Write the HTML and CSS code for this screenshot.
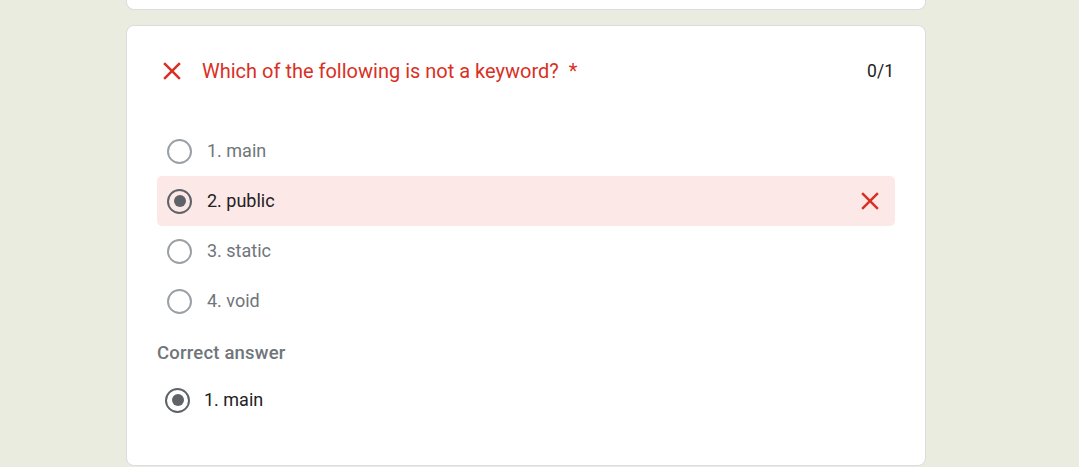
FILE: index.html
```html
<!DOCTYPE html>
<html>
<head>
<meta charset="utf-8">
<link rel="stylesheet" href="styles.css">
</head>
<body>
<div class="page">
  <div class="card card-prev"></div>
  <div class="card card-q">
    <div class="q-header">
      <div class="q-title">
        <svg class="x-icon" viewBox="0 0 24 24" width="30" height="30"><path fill="#d93025" d="M19 6.41L17.59 5 12 10.59 6.41 5 5 6.41 10.59 12 5 17.59 6.41 19 12 13.41 17.59 19 19 17.59 13.41 12z"/></svg>
        <span class="q-text">Which of the following is not a keyword?&nbsp; *</span>
      </div>
      <div class="q-score">0/1</div>
    </div>
    <div class="options">
      <div class="opt"><span class="radio"></span><span class="opt-label">1. main</span></div>
      <div class="opt opt-wrong"><span class="radio radio-on"></span><span class="opt-label">2. public</span>
        <svg class="x-icon x-row" viewBox="0 0 24 24" width="30" height="30"><path fill="#d93025" d="M19 6.41L17.59 5 12 10.59 6.41 5 5 6.41 10.59 12 5 17.59 6.41 19 12 13.41 17.59 19 19 17.59 13.41 12z"/></svg>
      </div>
      <div class="opt"><span class="radio"></span><span class="opt-label">3. static</span></div>
      <div class="opt"><span class="radio"></span><span class="opt-label">4. void</span></div>
    </div>
    <div class="correct-title">Correct answer</div>
    <div class="correct-row"><span class="radio radio-on"></span><span class="opt-label">1. main</span></div>
  </div>
</div>
</body>
</html>
```

FILE: styles.css
```css
html, body {
  margin: 0;
  padding: 0;
  background: #e9ecdf;
  font-family: Roboto, "Liberation Sans", sans-serif;
  overflow: hidden;
}
.page {
  padding-left: 126px;
  width: 800px;
}
.card {
  background: #fff;
  border: 1px solid #dadce0;
  border-radius: 8px;
  box-sizing: border-box;
}
.card-prev {
  height: 10px;
  border-top: none;
  border-radius: 0 0 8px 8px;
}
.card-q {
  margin-top: 15px;
  padding: 30px 30px 40px 30px;
}
.q-header {
  display: flex;
  align-items: center;
  justify-content: space-between;
  height: 30px;
}
.q-title {
  display: flex;
  align-items: center;
}
.x-icon {
  display: block;
  flex: none;
}
.q-title .x-icon {
  margin-right: 15px;
}
.q-text {
  color: #d93025;
  font-size: 20px;
  line-height: 30px;
}
.q-score {
  color: #202124;
  font-size: 17.5px;
  margin-right: 1px;
}
.options {
  margin-top: 40px;
}
.opt {
  display: flex;
  align-items: center;
  height: 50px;
  padding-left: 10px;
  padding-right: 10px;
  border-radius: 5px;
}
.opt-wrong {
  background: #fce8e6;
}
.opt-wrong .opt-label {
  color: #202124;
}
.x-row {
  margin-left: auto;
}
.radio {
  width: 25px;
  height: 25px;
  box-sizing: border-box;
  border: 2.5px solid #9aa0a6;
  border-radius: 50%;
  flex: none;
  display: flex;
  align-items: center;
  justify-content: center;
}
.radio-on {
  border-color: #5f6368;
}
.radio-on::after {
  content: "";
  width: 12px;
  height: 12px;
  border-radius: 50%;
  background: #5f6368;
}
.opt-label {
  margin-left: 15px;
  font-size: 18px;
  line-height: 24px;
  color: #70757a;
}
.correct-title {
  margin-top: 15px;
  line-height: 24px;
  font-size: 18.5px;
  font-weight: 500;
  letter-spacing: 0.2px;
  color: #70757a;
}
.correct-row {
  margin-top: 10px;
  display: flex;
  align-items: center;
  height: 50px;
  padding-left: 8px;
}
.correct-row .opt-label {
  margin-left: 14px;
  color: #202124;
}
```
